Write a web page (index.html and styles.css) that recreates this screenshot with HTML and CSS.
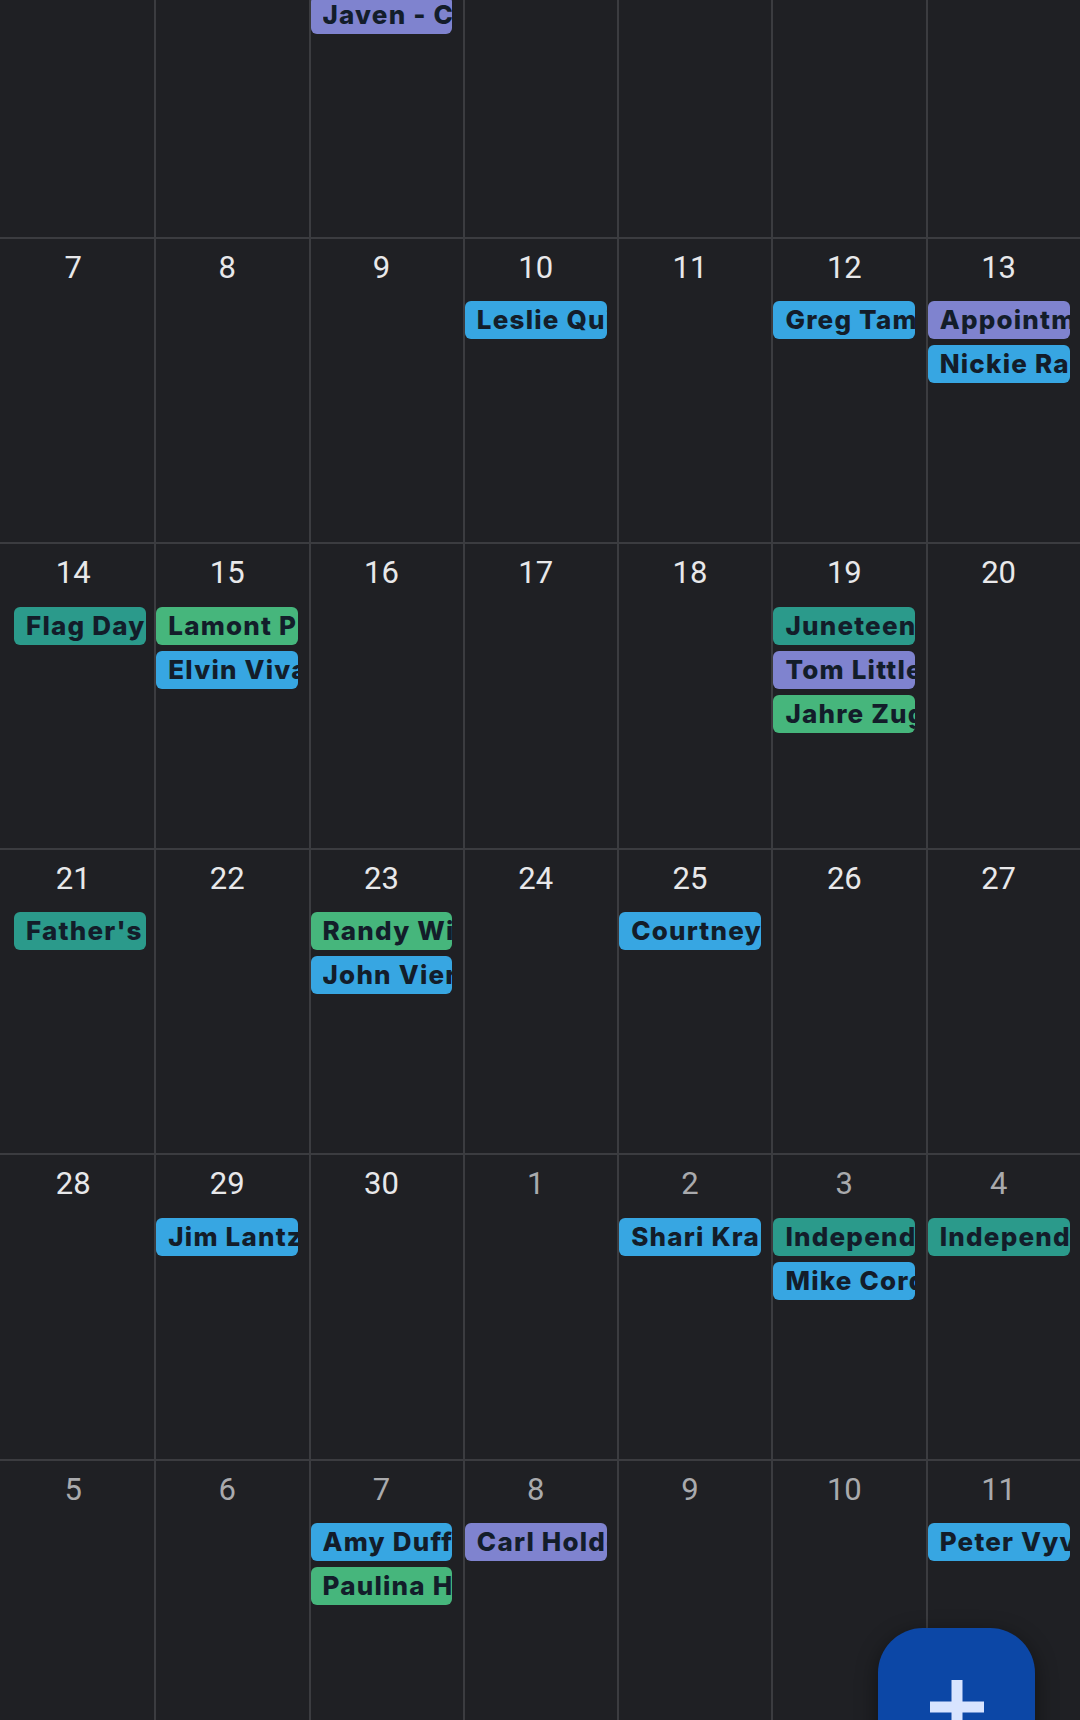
FILE: index.html
```html
<!DOCTYPE html>
<html lang="en">
<head>
<meta charset="utf-8">
<title>June 2026</title>
<link rel="stylesheet" href="styles.css">
</head>
<body>
<main class="month">
  <div class="week">
    <div class="day other"><span class="date">31</span></div>
    <div class="day"><span class="date">1</span></div>
    <div class="day"><span class="date">2</span>
      <div class="events"><div class="ev purple"><span>Javen - Consult</span></div></div>
    </div>
    <div class="day"><span class="date">3</span></div>
    <div class="day"><span class="date">4</span></div>
    <div class="day"><span class="date">5</span></div>
    <div class="day"><span class="date">6</span></div>
  </div>

  <div class="week">
    <div class="day"><span class="date">7</span></div>
    <div class="day"><span class="date">8</span></div>
    <div class="day"><span class="date">9</span></div>
    <div class="day"><span class="date">10</span>
      <div class="events"><div class="ev blue"><span>Leslie Quintero</span></div></div>
    </div>
    <div class="day"><span class="date">11</span></div>
    <div class="day"><span class="date">12</span>
      <div class="events"><div class="ev blue"><span>Greg Tamura</span></div></div>
    </div>
    <div class="day"><span class="date">13</span>
      <div class="events">
        <div class="ev purple"><span>Appointment</span></div>
        <div class="ev blue"><span>Nickie Ramos</span></div>
      </div>
    </div>
  </div>

  <div class="week">
    <div class="day"><span class="date">14</span>
      <div class="events"><div class="ev teal"><span>Flag Day</span></div></div>
    </div>
    <div class="day"><span class="date">15</span>
      <div class="events">
        <div class="ev green"><span>Lamont Pierce</span></div>
        <div class="ev blue"><span>Elvin Vivas</span></div>
      </div>
    </div>
    <div class="day"><span class="date">16</span></div>
    <div class="day"><span class="date">17</span></div>
    <div class="day"><span class="date">18</span></div>
    <div class="day"><span class="date">19</span>
      <div class="events">
        <div class="ev teal"><span>Juneteenth</span></div>
        <div class="ev purple"><span>Tom Little</span></div>
        <div class="ev green"><span>Jahre Zugel</span></div>
      </div>
    </div>
    <div class="day"><span class="date">20</span></div>
  </div>

  <div class="week">
    <div class="day"><span class="date">21</span>
      <div class="events"><div class="ev teal"><span>Father's Day</span></div></div>
    </div>
    <div class="day"><span class="date">22</span></div>
    <div class="day"><span class="date">23</span>
      <div class="events">
        <div class="ev green"><span>Randy Wilson</span></div>
        <div class="ev blue"><span>John Vierra</span></div>
      </div>
    </div>
    <div class="day"><span class="date">24</span></div>
    <div class="day"><span class="date">25</span>
      <div class="events"><div class="ev blue"><span>Courtney Hale</span></div></div>
    </div>
    <div class="day"><span class="date">26</span></div>
    <div class="day"><span class="date">27</span></div>
  </div>

  <div class="week">
    <div class="day"><span class="date">28</span></div>
    <div class="day"><span class="date">29</span>
      <div class="events"><div class="ev blue"><span>Jim Lantz</span></div></div>
    </div>
    <div class="day"><span class="date">30</span></div>
    <div class="day other"><span class="date">1</span></div>
    <div class="day other"><span class="date">2</span>
      <div class="events"><div class="ev blue"><span>Shari Kramer</span></div></div>
    </div>
    <div class="day other"><span class="date">3</span>
      <div class="events">
        <div class="ev teal"><span>Independence Day</span></div>
        <div class="ev blue"><span>Mike Cordova</span></div>
      </div>
    </div>
    <div class="day other"><span class="date">4</span>
      <div class="events"><div class="ev teal"><span>Independence Day</span></div></div>
    </div>
  </div>

  <div class="week">
    <div class="day other"><span class="date">5</span></div>
    <div class="day other"><span class="date">6</span></div>
    <div class="day other"><span class="date">7</span>
      <div class="events">
        <div class="ev blue"><span>Amy Duffy</span></div>
        <div class="ev green"><span>Paulina Hart</span></div>
      </div>
    </div>
    <div class="day other"><span class="date">8</span>
      <div class="events"><div class="ev purple"><span>Carl Holden</span></div></div>
    </div>
    <div class="day other"><span class="date">9</span></div>
    <div class="day other"><span class="date">10</span></div>
    <div class="day other"><span class="date">11</span>
      <div class="events"><div class="ev blue"><span>Peter Vyvyan</span></div></div>
    </div>
  </div>
</main>

<button class="fab" type="button" aria-label="New event">
  <svg viewBox="0 0 54 54" width="54" height="54" aria-hidden="true">
    <rect x="21.5" y="0" width="11" height="54" fill="currentColor"/>
    <rect x="0" y="21.5" width="54" height="11" fill="currentColor"/>
  </svg>
</button>
</body>
</html>
```

FILE: styles.css
```css
html, body {
  margin: 0;
  padding: 0;
}

body {
  width: 1080px;
  height: 1720px;
  overflow: hidden;
  background: #1f2024;
  font-family: "Roboto", "Liberation Sans", sans-serif;
}

/* the month is scrolled so the first week is partly hidden */
.month {
  margin-top: -69px;
}

.week {
  display: grid;
  grid-template-columns: repeat(7, 1fr);
  height: 305.6px;
  box-sizing: border-box;
  border-top: 2px solid #3b3c40;
}

.day {
  display: flex;
  flex-direction: column;
  min-width: 0;
  border-left: 2px solid #3b3c40;
  padding-right: 10.5px;
}

.day:first-child {
  border-left: 0;
  padding-right: 8px;
}

.date {
  display: block;
  height: 62px;
  padding-top: 11px;
  box-sizing: border-box;
  text-align: center;
  font-size: 31px;
  line-height: 36px;
  font-weight: 400;
  color: #e8e8ea;
}

.day.other .date {
  color: #a9aaad;
}

.events {
  display: flex;
  flex-direction: column;
  gap: 6px;
  margin-top: 0.5px;
}

.day:first-child .ev {
  margin-left: 14px;
}

/* event chip: title is clipped hard at the chip's right edge */
.ev {
  height: 38px;
  line-height: 38px;
  padding-left: 12px;
  border-radius: 6px;
  overflow: hidden;
  white-space: nowrap;
  font-family: "Inter", "Liberation Sans", sans-serif;
  font-weight: 800;
  font-size: 26px;
  letter-spacing: 1.2px;
  color: #131d2a;
}

.ev span {
  display: block;
  overflow: hidden;
  white-space: nowrap;
}

.ev.blue   { background: #37a6e2; }
.ev.purple { background: #7f83cf; }
.ev.teal   { background: #2b9a8b; }
.ev.green  { background: #46b67c; }

.fab {
  position: fixed;
  left: 878px;
  top: 1628px;
  width: 157px;
  height: 156px;
  border: 0;
  padding: 0;
  border-radius: 45px;
  background: #0c47a6;
  color: #d8e4ff;
  display: flex;
  align-items: center;
  justify-content: center;
  box-shadow: 0 6px 22px rgba(0, 0, 0, 0.45);
}

.fab svg {
  display: block;
  margin-top: 2px;
}
```
